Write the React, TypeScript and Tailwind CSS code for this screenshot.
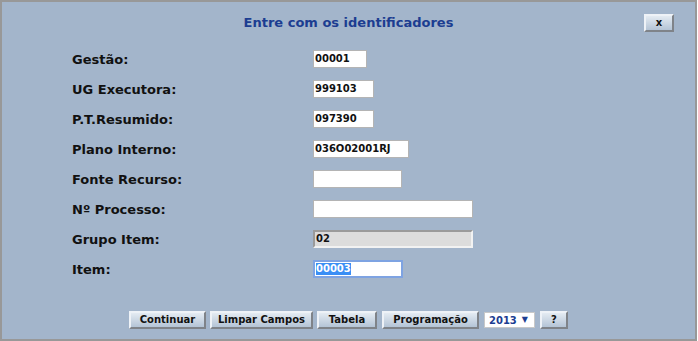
import React from "react";

const fields = [
  { label: "Gestão:", value: "00001", w: "w-[54px]", kind: "text" },
  { label: "UG Executora:", value: "999103", w: "w-[61px]", kind: "text" },
  { label: "P.T.Resumido:", value: "097390", w: "w-[61px]", kind: "text" },
  { label: "Plano Interno:", value: "036O02001RJ", w: "w-[96px]", kind: "text" },
  { label: "Fonte Recurso:", value: "", w: "w-[89px]", kind: "text" },
  { label: "Nº Processo:", value: "", w: "w-[160px]", kind: "text" },
  { label: "Grupo Item:", value: "02", w: "w-[160px]", kind: "disabled" },
  { label: "Item:", value: "00003", w: "w-[90px]", kind: "focus" },
];

const bevel =
  "h-[18px] border-2 border-t-[#eef2f7] border-l-[#eef2f7] border-b-[#7f8389] border-r-[#7f8389] bg-gradient-to-b from-[#e4ebf2] to-[#b4c4d6] text-[10px] font-bold text-[#111] flex items-center justify-center leading-none";

function Field({ value, w, kind }: { value: string; w: string; kind: string }) {
  if (kind === "disabled") {
    return (
      <div
        className={`${w} h-[18px] border-2 border-t-[#9a9a9a] border-l-[#9a9a9a] border-b-[#f2f2f2] border-r-[#f2f2f2] bg-[#dcdcdc] pl-[1px] flex items-center text-[10px] font-bold text-[#111]`}
      >
        {value}
      </div>
    );
  }
  if (kind === "focus") {
    return (
      <div
        className={`${w} h-[18px] border-2 border-[#7ea3e2] bg-white pl-[1px] flex items-center text-[10px] font-bold`}
      >
        <span className="bg-[#3a8ef5] text-white leading-[12px]">{value}</span>
      </div>
    );
  }
  return (
    <div
      className={`${w} h-[18px] border border-[#b4b4b4] bg-white pl-[1px] flex items-center text-[10px] font-bold text-[#111]`}
    >
      {value}
    </div>
  );
}

export default function App() {
  return (
    <div className="w-[697px] h-[341px] border-2 border-[#989898] bg-[#a3b5cb] flex flex-col font-['DejaVu_Sans',Verdana,sans-serif]">
      {/* cabeçalho */}
      <div className="pt-[11px] grid grid-cols-[1fr_auto_1fr] items-center">
        <div />
        <h1 className="text-[13px] font-bold text-[#1c3d91]">
          Entre com os identificadores
        </h1>
        <button className={`${bevel} w-[30px] justify-self-end mr-[21px]`}>x</button>
      </div>

      {/* campos */}
      <div className="mt-[17px] flex flex-col gap-[12px] pl-[70px]">
        {fields.map((f) => (
          <div key={f.label} className="flex items-center h-[18px]">
            <span className="w-[241px] text-[13px] leading-[18px] font-bold text-[#111] pt-[2px]">
              {f.label}
            </span>
            <Field value={f.value} w={f.w} kind={f.kind} />
          </div>
        ))}
      </div>

      {/* botões */}
      <div className="mt-auto pb-[10px] flex justify-center items-center gap-[4px]">
        <button className={`${bevel} w-[77px]`}>Continuar</button>
        <button className={`${bevel} w-[103px]`}>Limpar Campos</button>
        <button className={`${bevel} w-[60px]`}>Tabela</button>
        <button className={`${bevel} w-[97px] ml-[1px]`}>Programação</button>
        <div className="w-[51px] h-[16px] ml-[1px] border border-[#c8c8c8] bg-white flex items-center pl-[4px] gap-[5px] text-[10px] font-bold text-[#1c3d91]">
          <span>2013</span>
          <span className="text-[8px]">▼</span>
        </div>
        <button className={`${bevel} w-[28px] ml-[1px]`}>?</button>
      </div>
    </div>
  );
}
